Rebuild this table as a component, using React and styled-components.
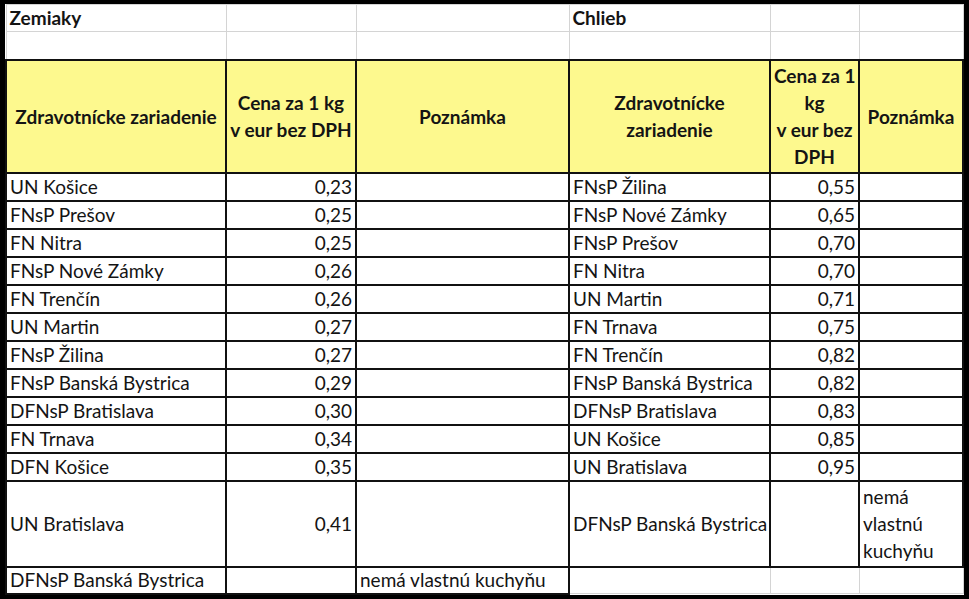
import React from 'react';
import styled, { createGlobalStyle } from 'styled-components';

const GlobalStyle = createGlobalStyle`
  html, body {
    margin: 0;
    padding: 0;
    background: #000;
  }
`;

const Frame = styled.div`
  box-sizing: border-box;
  width: 969px;
  height: 599px;
  padding: 4px 7px 6px 5px;
  background: #000;
  overflow: hidden;
`;

const Sheet = styled.table`
  table-layout: fixed;
  border-collapse: collapse;
  width: 957px;
  background: #fff;
  font-family: Lato, "Open Sans", "Liberation Sans", sans-serif;
  font-size: 19px;
  color: #141414;
`;

const Row = styled.tr`
  height: ${p => p.$h}px;
`;

const Cell = styled.td`
  box-sizing: border-box;
  padding: 0 3px;
  line-height: ${p => (p.$wrap ? 27 : 22)}px;
  white-space: nowrap;
  overflow: hidden;
  vertical-align: middle;
  text-align: ${p => p.$align || 'left'};
  font-weight: ${p => (p.$bold ? 700 : 400)};
  background: ${p => (p.$head ? '#fdf98e' : '#fff')};
  border: ${p => (p.$grid ? '1px solid #d4d4d4' : '2px solid #111')};
`;

const zemiaky = [
  ['UN Košice', '0,23'],
  ['FNsP Prešov', '0,25'],
  ['FN Nitra', '0,25'],
  ['FNsP Nové Zámky', '0,26'],
  ['FN Trenčín', '0,26'],
  ['UN Martin', '0,27'],
  ['FNsP Žilina', '0,27'],
  ['FNsP Banská Bystrica', '0,29'],
  ['DFNsP Bratislava', '0,30'],
  ['FN Trnava', '0,34'],
  ['DFN Košice', '0,35'],
];

const chlieb = [
  ['FNsP Žilina', '0,55'],
  ['FNsP Nové Zámky', '0,65'],
  ['FNsP Prešov', '0,70'],
  ['FN Nitra', '0,70'],
  ['UN Martin', '0,71'],
  ['FN Trnava', '0,75'],
  ['FN Trenčín', '0,82'],
  ['FNsP Banská Bystrica', '0,82'],
  ['DFNsP Bratislava', '0,83'],
  ['UN Košice', '0,85'],
  ['UN Bratislava', '0,95'],
];

const widths = [220, 130, 213, 201, 89, 104];

export default function App() {
  return (
    <Frame>
      <GlobalStyle />
      <Sheet>
        <colgroup>
          {widths.map((w, i) => <col key={i} style={{ width: w }} />)}
        </colgroup>
        <tbody>
          <Row $h={27}>
            <Cell $grid $bold>Zemiaky</Cell>
            <Cell $grid />
            <Cell $grid />
            <Cell $grid $bold>Chlieb</Cell>
            <Cell $grid />
            <Cell $grid />
          </Row>
          <Row $h={28}>
            <Cell $grid />
            <Cell $grid />
            <Cell $grid />
            <Cell $grid />
            <Cell $grid />
            <Cell $grid />
          </Row>
          <Row $h={113}>
            <Cell $head $bold $wrap $align="center">Zdravotnícke zariadenie</Cell>
            <Cell $head $bold $wrap $align="center">Cena za 1 kg<br />v eur bez DPH</Cell>
            <Cell $head $bold $wrap $align="center">Poznámka</Cell>
            <Cell $head $bold $wrap $align="center">Zdravotnícke<br />zariadenie</Cell>
            <Cell $head $bold $wrap $align="center">Cena za 1<br />kg<br />v eur bez<br />DPH</Cell>
            <Cell $head $bold $wrap $align="center">Poznámka</Cell>
          </Row>
          {zemiaky.map((z, i) => (
            <Row $h={28} key={i}>
              <Cell>{z[0]}</Cell>
              <Cell $align="right">{z[1]}</Cell>
              <Cell />
              <Cell>{chlieb[i][0]}</Cell>
              <Cell $align="right">{chlieb[i][1]}</Cell>
              <Cell />
            </Row>
          ))}
          <Row $h={86}>
            <Cell>UN Bratislava</Cell>
            <Cell $align="right">0,41</Cell>
            <Cell />
            <Cell>DFNsP Banská Bystrica</Cell>
            <Cell />
            <Cell $wrap>nemá<br />vlastnú<br />kuchyňu</Cell>
          </Row>
          <Row $h={27}>
            <Cell>DFNsP Banská Bystrica</Cell>
            <Cell />
            <Cell>nemá vlastnú kuchyňu</Cell>
            <Cell $grid />
            <Cell $grid />
            <Cell $grid />
          </Row>
        </tbody>
      </Sheet>
    </Frame>
  );
}
